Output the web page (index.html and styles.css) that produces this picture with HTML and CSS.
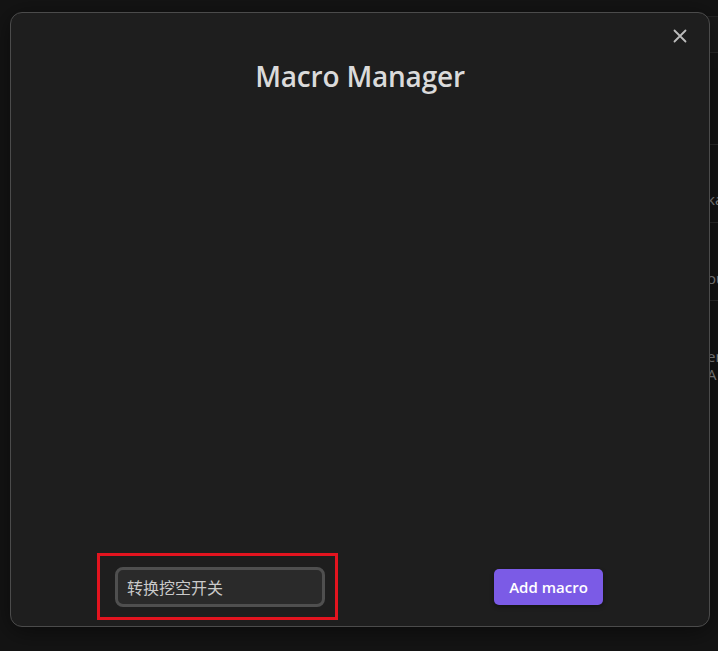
FILE: index.html
```html
<!DOCTYPE html>
<html lang="zh">
<head>
<meta charset="utf-8">
<title>Macro Manager</title>
<link rel="stylesheet" href="styles.css">
</head>
<body>
<div class="backdrop">
  <div class="side">
    <div class="side-head"></div>
    <div class="side-tabs"></div>
    <div class="side-row r1"></div>
    <div class="side-row r2"><span class="frag">ka</span></div>
    <div class="side-row r3"><span class="frag">ou</span></div>
    <div class="side-row r4"><span class="frag">er</span><span class="frag">A</span></div>
  </div>
</div>

<div class="modal">
  <button class="close" aria-label="Close">
    <svg width="14" height="14" viewBox="0 0 14 14"><path d="M1.5 1.5 L12.5 12.5 M12.5 1.5 L1.5 12.5" stroke="#bdbdbd" stroke-width="1.8" stroke-linecap="round" fill="none"/></svg>
  </button>
  <h1 class="title">Macro Manager</h1>
  <div class="content"></div>
  <div class="footer">
    <div class="highlight">
      <input class="name-input" type="text" value="转换挖空开关">
    </div>
    <button class="add-btn">Add macro</button>
  </div>
</div>
</body>
</html>
```

FILE: styles.css
```css
html, body {
  margin: 0;
  padding: 0;
  width: 718px;
  height: 651px;
  overflow: hidden;
  background: #141414;
  font-family: "Open Sans", "Noto Sans", "Noto Sans CJK SC", sans-serif;
}

.backdrop {
  display: flex;
  justify-content: flex-end;
  height: 651px;
  overflow: hidden;
}

.side {
  width: 120px;
  display: flex;
  flex-direction: column;
  padding-top: 16px;
}

.side-head {
  height: 35px;
  background: #1a1a1a;
  border-top: 1px solid #262626;
  border-bottom: 1px solid #2a2a2a;
}

.side-tabs {
  height: 15px;
  background: #151515;
}

.side-row {
  border-bottom: 1px solid #2b2b2b;
  display: flex;
  flex-direction: column;
  padding-left: 109px;
  box-sizing: border-box;
  white-space: nowrap;
}

.r1 { height: 77px; }
.r2 { height: 78px; padding-top: 45px; }
.r3 { height: 78px; padding-top: 46px; }
.r4 { border-bottom: none; padding-top: 46px; }

.frag {
  color: #8a8a8a;
  font-size: 15px;
  line-height: 18px;
}

.modal {
  position: absolute;
  left: 10px;
  top: 12px;
  width: 698px;
  height: 613px;
  background: #1e1e1e;
  border: 1px solid #4b4b4b;
  border-radius: 12px;
  box-shadow: 0 4px 24px rgba(0, 0, 0, 0.5);
  display: flex;
  flex-direction: column;
}

.close {
  position: absolute;
  top: 13px;
  right: 19px;
  width: 20px;
  height: 20px;
  padding: 0;
  border: none;
  background: transparent;
  display: flex;
  align-items: center;
  justify-content: center;
}

.title {
  margin: 44px 0 0 0;
  text-align: center;
  color: #dadada;
  font-size: 28px;
  font-weight: 600;
  line-height: 38px;
  letter-spacing: -0.2px;
}

.content {
  flex: 1;
}

.footer {
  display: flex;
  justify-content: space-between;
  align-items: center;
  padding: 0 106px 6px 86px;
}

.highlight {
  border: 3px solid #e3141f;
  padding: 11px 10px 10px 15px;
}

.name-input {
  box-sizing: border-box;
  width: 210px;
  height: 40px;
  background: #2a2a2a;
  border: 3px solid #4f4f4f;
  border-radius: 8px;
  padding: 0 9px;
  color: #c9c9c9;
  font-size: 16px;
  font-family: "Noto Sans CJK SC", "Noto Sans", sans-serif;
  outline: none;
}

.add-btn {
  width: 109px;
  height: 36px;
  background: #7b5be6;
  color: #ffffff;
  border: none;
  border-radius: 5px;
  font-family: "Open Sans", "Noto Sans", sans-serif;
  font-size: 15px;
  font-weight: 600;
  box-shadow: 0 2px 4px rgba(0, 0, 0, 0.35);
  padding: 0;
}
```
